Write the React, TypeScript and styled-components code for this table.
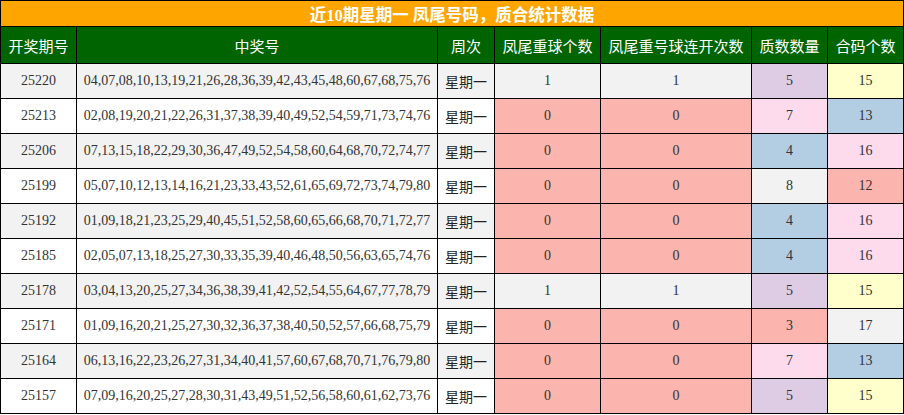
import styled, { createGlobalStyle } from 'styled-components';

interface Draw {
  issue: string;
  numbers: string;
  tailRepeat: number;
  tailStreak: number;
  primes: number;
  composites: number;
}

const draws: Draw[] = [
  { issue: '25220', numbers: '04,07,08,10,13,19,21,26,28,36,39,42,43,45,48,60,67,68,75,76', tailRepeat: 1, tailStreak: 1, primes: 5, composites: 15 },
  { issue: '25213', numbers: '02,08,19,20,21,22,26,31,37,38,39,40,49,52,54,59,71,73,74,76', tailRepeat: 0, tailStreak: 0, primes: 7, composites: 13 },
  { issue: '25206', numbers: '07,13,15,18,22,29,30,36,47,49,52,54,58,60,64,68,70,72,74,77', tailRepeat: 0, tailStreak: 0, primes: 4, composites: 16 },
  { issue: '25199', numbers: '05,07,10,12,13,14,16,21,23,33,43,52,61,65,69,72,73,74,79,80', tailRepeat: 0, tailStreak: 0, primes: 8, composites: 12 },
  { issue: '25192', numbers: '01,09,18,21,23,25,29,40,45,51,52,58,60,65,66,68,70,71,72,77', tailRepeat: 0, tailStreak: 0, primes: 4, composites: 16 },
  { issue: '25185', numbers: '02,05,07,13,18,25,27,30,33,35,39,40,46,48,50,56,63,65,74,76', tailRepeat: 0, tailStreak: 0, primes: 4, composites: 16 },
  { issue: '25178', numbers: '03,04,13,20,25,27,34,36,38,39,41,42,52,54,55,64,67,77,78,79', tailRepeat: 1, tailStreak: 1, primes: 5, composites: 15 },
  { issue: '25171', numbers: '01,09,16,20,21,25,27,30,32,36,37,38,40,50,52,57,66,68,75,79', tailRepeat: 0, tailStreak: 0, primes: 3, composites: 17 },
  { issue: '25164', numbers: '06,13,16,22,23,26,27,31,34,40,41,57,60,67,68,70,71,76,79,80', tailRepeat: 0, tailStreak: 0, primes: 7, composites: 13 },
  { issue: '25157', numbers: '07,09,16,20,25,27,28,30,31,43,49,51,52,56,58,60,61,62,73,76', tailRepeat: 0, tailStreak: 0, primes: 5, composites: 15 },
];

// pastel palette keyed by value
const tailColor: Record<number, string> = { 0: '#fbb4ae', 1: '#f2f2f2' };
const primeColor: Record<number, string> = { 3: '#fbb4ae', 4: '#b3cde3', 5: '#decbe4', 7: '#fddaec', 8: '#f2f2f2' };
const compColor: Record<number, string> = { 12: '#fbb4ae', 13: '#b3cde3', 15: '#ffffcc', 16: '#fddaec', 17: '#f2f2f2' };

const headers = ['开奖期号', '中奖号', '周次', '凤尾重球个数', '凤尾重号球连开次数', '质数数量', '合码个数'];
const widths = [76, 361, 57, 106, 151, 76, 76];

export default function App() {
  return (
    <>
      <GlobalStyle />
      <Table>
        <colgroup>
          {widths.map((w, i) => <col key={i} style={{ width: w }} />)}
        </colgroup>
        <tbody>
          <tr>
            <TitleCell colSpan={7}>近10期星期一 凤尾号码，质合统计数据</TitleCell>
          </tr>
          <HeadRow>
            {headers.map(h => <HeadCell key={h}>{h}</HeadCell>)}
          </HeadRow>
          {draws.map((d, i) => (
            <Row key={d.issue} $odd={i % 2 === 0}>
              <Cell>{d.issue}</Cell>
              <Cell>{d.numbers}</Cell>
              <WeekCell>星期一</WeekCell>
              <Cell $bg={tailColor[d.tailRepeat]}>{d.tailRepeat}</Cell>
              <Cell $bg={tailColor[d.tailStreak]}>{d.tailStreak}</Cell>
              <Cell $bg={primeColor[d.primes]}>{d.primes}</Cell>
              <Cell $bg={compColor[d.composites]}>{d.composites}</Cell>
            </Row>
          ))}
        </tbody>
      </Table>
    </>
  );
}

/* ── Styled components ───────────────────────────────────── */

const GlobalStyle = createGlobalStyle`
  body {
    margin: 0;
    background: #fff;
    font-family: "Liberation Serif", "Noto Sans CJK SC", serif;
  }
`;

const Table = styled.table`
  width: 903px;
  border-collapse: collapse;
  table-layout: fixed;
  border: 1px solid #000;
`;

const TitleCell = styled.td`
  height: 25px;
  padding: 0;
  background: #ffa500;
  color: #fff;
  font-size: 16.5px;
  font-weight: 700;
  text-align: center;
  border: 1px solid #000;
  font-family: "Liberation Serif", "Noto Sans CJK SC", sans-serif;
`;

const HeadRow = styled.tr`
  height: 37px;
`;

const HeadCell = styled.th`
  padding: 0;
  background: #006400;
  color: #fff;
  font-size: 15px;
  font-weight: 400;
  text-align: center;
  border: 1px solid #000;
  font-family: "Noto Sans CJK SC", sans-serif;
`;

const Row = styled.tr<{ $odd: boolean }>`
  height: 35px;
  background: ${({ $odd }) => ($odd ? '#f2f2f2' : '#fff')};
`;

const Cell = styled.td<{ $bg?: string }>`
  padding: 0;
  text-align: center;
  font-size: 14px;
  color: #333;
  border: 1px solid #000;
  white-space: nowrap;
  background: ${({ $bg }) => $bg ?? 'transparent'};
`;

const WeekCell = styled(Cell)`
  font-size: 14px;
  color: #222;
  font-family: "Noto Sans CJK SC", sans-serif;
`;
